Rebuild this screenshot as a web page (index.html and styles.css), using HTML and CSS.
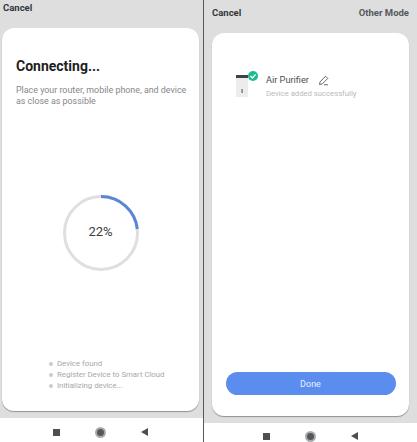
FILE: index.html
```html
<!DOCTYPE html>
<html lang="en">
  <head>
    <meta charset="UTF-8" />
    <title>Add device</title>
    <link rel="stylesheet" href="styles.css">
  </head>

  <body>
    <div class="phones">
      <!-- Connecting -->
      <section class="screen screen-left">
        <div class="top-bar top-bar-left">
          <span>Cancel</span>
        </div>
        <div class="card card-left">
          <h1 class="title">Connecting...</h1>
          <p class="hint">Place your router, mobile phone, and device as close as possible</p>
          <div class="ring">
            <svg width="78" height="78" viewBox="0 0 78 78">
              <circle cx="39" cy="39" r="36.5" fill="none" stroke="#dfdfdf" stroke-width="3" />
              <path d="M39 2.5A36.5 36.5 0 0 1 75.3 35" fill="none" stroke="#5b86d6" stroke-width="3" />
            </svg>
            <span class="ring-value">22%</span>
          </div>
          <ul class="steps">
            <li>Device found</li>
            <li>Register Device to Smart Cloud</li>
            <li>Initializing device...</li>
          </ul>
        </div>
        <div class="gray-gap"></div>
        <nav class="nav-bar nav-left">
          <span class="nav-square"></span>
          <span class="nav-circle"></span>
          <span class="nav-back"></span>
        </nav>
      </section>

      <!-- Done -->
      <section class="screen screen-right">
        <div class="top-bar top-bar-right">
          <span>Cancel</span>
          <span class="other-mode">Other Mode</span>
        </div>
        <div class="card card-right">
          <div class="device">
            <div class="device-icon">
              <svg width="24" height="28" viewBox="0 0 24 28">
                <rect x="0" y="6" width="12" height="20" fill="#ececec" />
                <rect x="0" y="4" width="12" height="3" fill="#3f4347" />
                <rect x="5.4" y="18" width="1.4" height="4" fill="#77797c" />
                <circle cx="17" cy="5" r="5" fill="#1fb992" />
                <path d="M14.4 5l2 2 3.2-3.6" fill="none" stroke="#fff" stroke-width="1.3" />
              </svg>
            </div>
            <div class="device-text">
              <div class="device-name">
                <span>Air Purifier</span>
                <svg class="edit-icon" width="11" height="11" viewBox="0 0 11 11">
                  <path d="M1.5 9.5l.5-2.6L7.6 1.2l2.2 2.2L4.2 9zM6 9.8h4" fill="none" stroke="#55585c" stroke-width=".9" />
                </svg>
              </div>
              <div class="device-status">Device added successfully</div>
            </div>
          </div>
          <button class="done-btn">Done</button>
        </div>
        <div class="gray-gap"></div>
        <nav class="nav-bar nav-right">
          <span class="nav-square"></span>
          <span class="nav-circle"></span>
          <span class="nav-back"></span>
        </nav>
      </section>
    </div>
  </body>
</html>
```

FILE: styles.css
```css
html,
body {
  margin: 0;
  padding: 0;
  background-color: #fff;
}

body {
  font-family: Roboto, "Noto Sans", sans-serif;
  color: #26282b;
}

.phones {
  display: flex;
  width: 417px;
  height: 442px;
  overflow: hidden;
}

.screen {
  display: flex;
  flex-direction: column;
  height: 442px;
  background-color: #dedede;
}

.screen-left {
  width: 203px;
  border-right: 1px solid #55585c;
}

.screen-right {
  width: 213px;
}

.top-bar {
  display: flex;
  justify-content: space-between;
  align-items: center;
  font-size: 9.5px;
  font-weight: 700;
  color: #33363a;
}

.top-bar-left {
  height: 14px;
  padding: 0 0 14px 3px;
}

.top-bar-right {
  height: 25px;
  padding: 0 8px 8px 8px;
}

.other-mode {
  color: #55585c;
}

.card {
  box-sizing: border-box;
  width: 197px;
  height: 383px;
  background-color: #fff;
  border-radius: 12px;
  box-shadow: 0 1px 1px rgba(0, 0, 0, 0.35);
  display: flex;
  flex-direction: column;
}

.card-left {
  margin-left: 2px;
  padding: 30px 14px 0 14px;
}

.card-right {
  margin-left: 8px;
  padding: 41px 14px 0 14px;
}

.gray-gap {
  flex: 0 0 7px;
}

.title {
  margin: 0;
  font-size: 14px;
  line-height: 16px;
  font-weight: 700;
  color: #1d1f22;
}

.hint {
  margin: 11px -4px 0 0;
  font-size: 8.9px;
  line-height: 10.5px;
  color: #85888c;
}

.ring {
  position: relative;
  align-self: center;
  width: 78px;
  height: 78px;
  margin-top: 88px;
}

.ring svg {
  display: block;
}

.ring-value {
  position: absolute;
  left: 0;
  right: 0;
  top: 30px;
  text-align: center;
  font-size: 13px;
  line-height: 16px;
  color: #3c3e42;
}

.steps {
  list-style: none;
  margin: 87px 0 0 0;
  padding: 0 0 0 33px;
  font-size: 7.8px;
  line-height: 10.8px;
  color: #a5a8ab;
  white-space: nowrap;
}

.steps li {
  display: flex;
  align-items: center;
  gap: 4px;
}

.steps li::before {
  content: "";
  width: 4px;
  height: 4px;
  border-radius: 50%;
  background-color: #c9cbcd;
}

.device {
  display: flex;
  gap: 6px;
  margin-left: 10px;
}

.device-icon {
  width: 24px;
  height: 28px;
  margin-top: -3px;
}

.device-name {
  display: flex;
  align-items: center;
  gap: 9px;
  font-size: 9.2px;
  line-height: 12px;
  color: #4b4e52;
}

.device-status {
  margin-top: 3px;
  font-size: 7.7px;
  line-height: 10px;
  color: #b8babc;
  white-space: nowrap;
}

.done-btn {
  display: block;
  width: 170px;
  height: 23px;
  margin: auto 0 0 0;
  position: relative;
  top: -21px;
  align-self: center;
  border: none;
  border-radius: 12px;
  background-color: #5b8def;
  color: #e9f0fd;
  font-family: inherit;
  font-size: 9px;
  cursor: pointer;
}

.nav-bar {
  flex: 1;
  box-sizing: border-box;
  display: flex;
  align-items: center;
  background-color: #fff;
}

.nav-left {
  padding: 4px 0 0 53px;
}

.nav-right {
  padding: 7px 0 0 59px;
}

.nav-square {
  width: 7px;
  height: 7px;
  background-color: #4d5053;
}

.nav-circle {
  box-sizing: border-box;
  width: 11px;
  height: 11px;
  margin-left: 35px;
  border-radius: 50%;
  background-color: #55585b;
  border: 2px solid #a9abad;
}

.nav-back {
  width: 0;
  height: 0;
  margin-left: 35px;
  border-top: 4px solid transparent;
  border-bottom: 4px solid transparent;
  border-right: 7px solid #4d5053;
}
```
